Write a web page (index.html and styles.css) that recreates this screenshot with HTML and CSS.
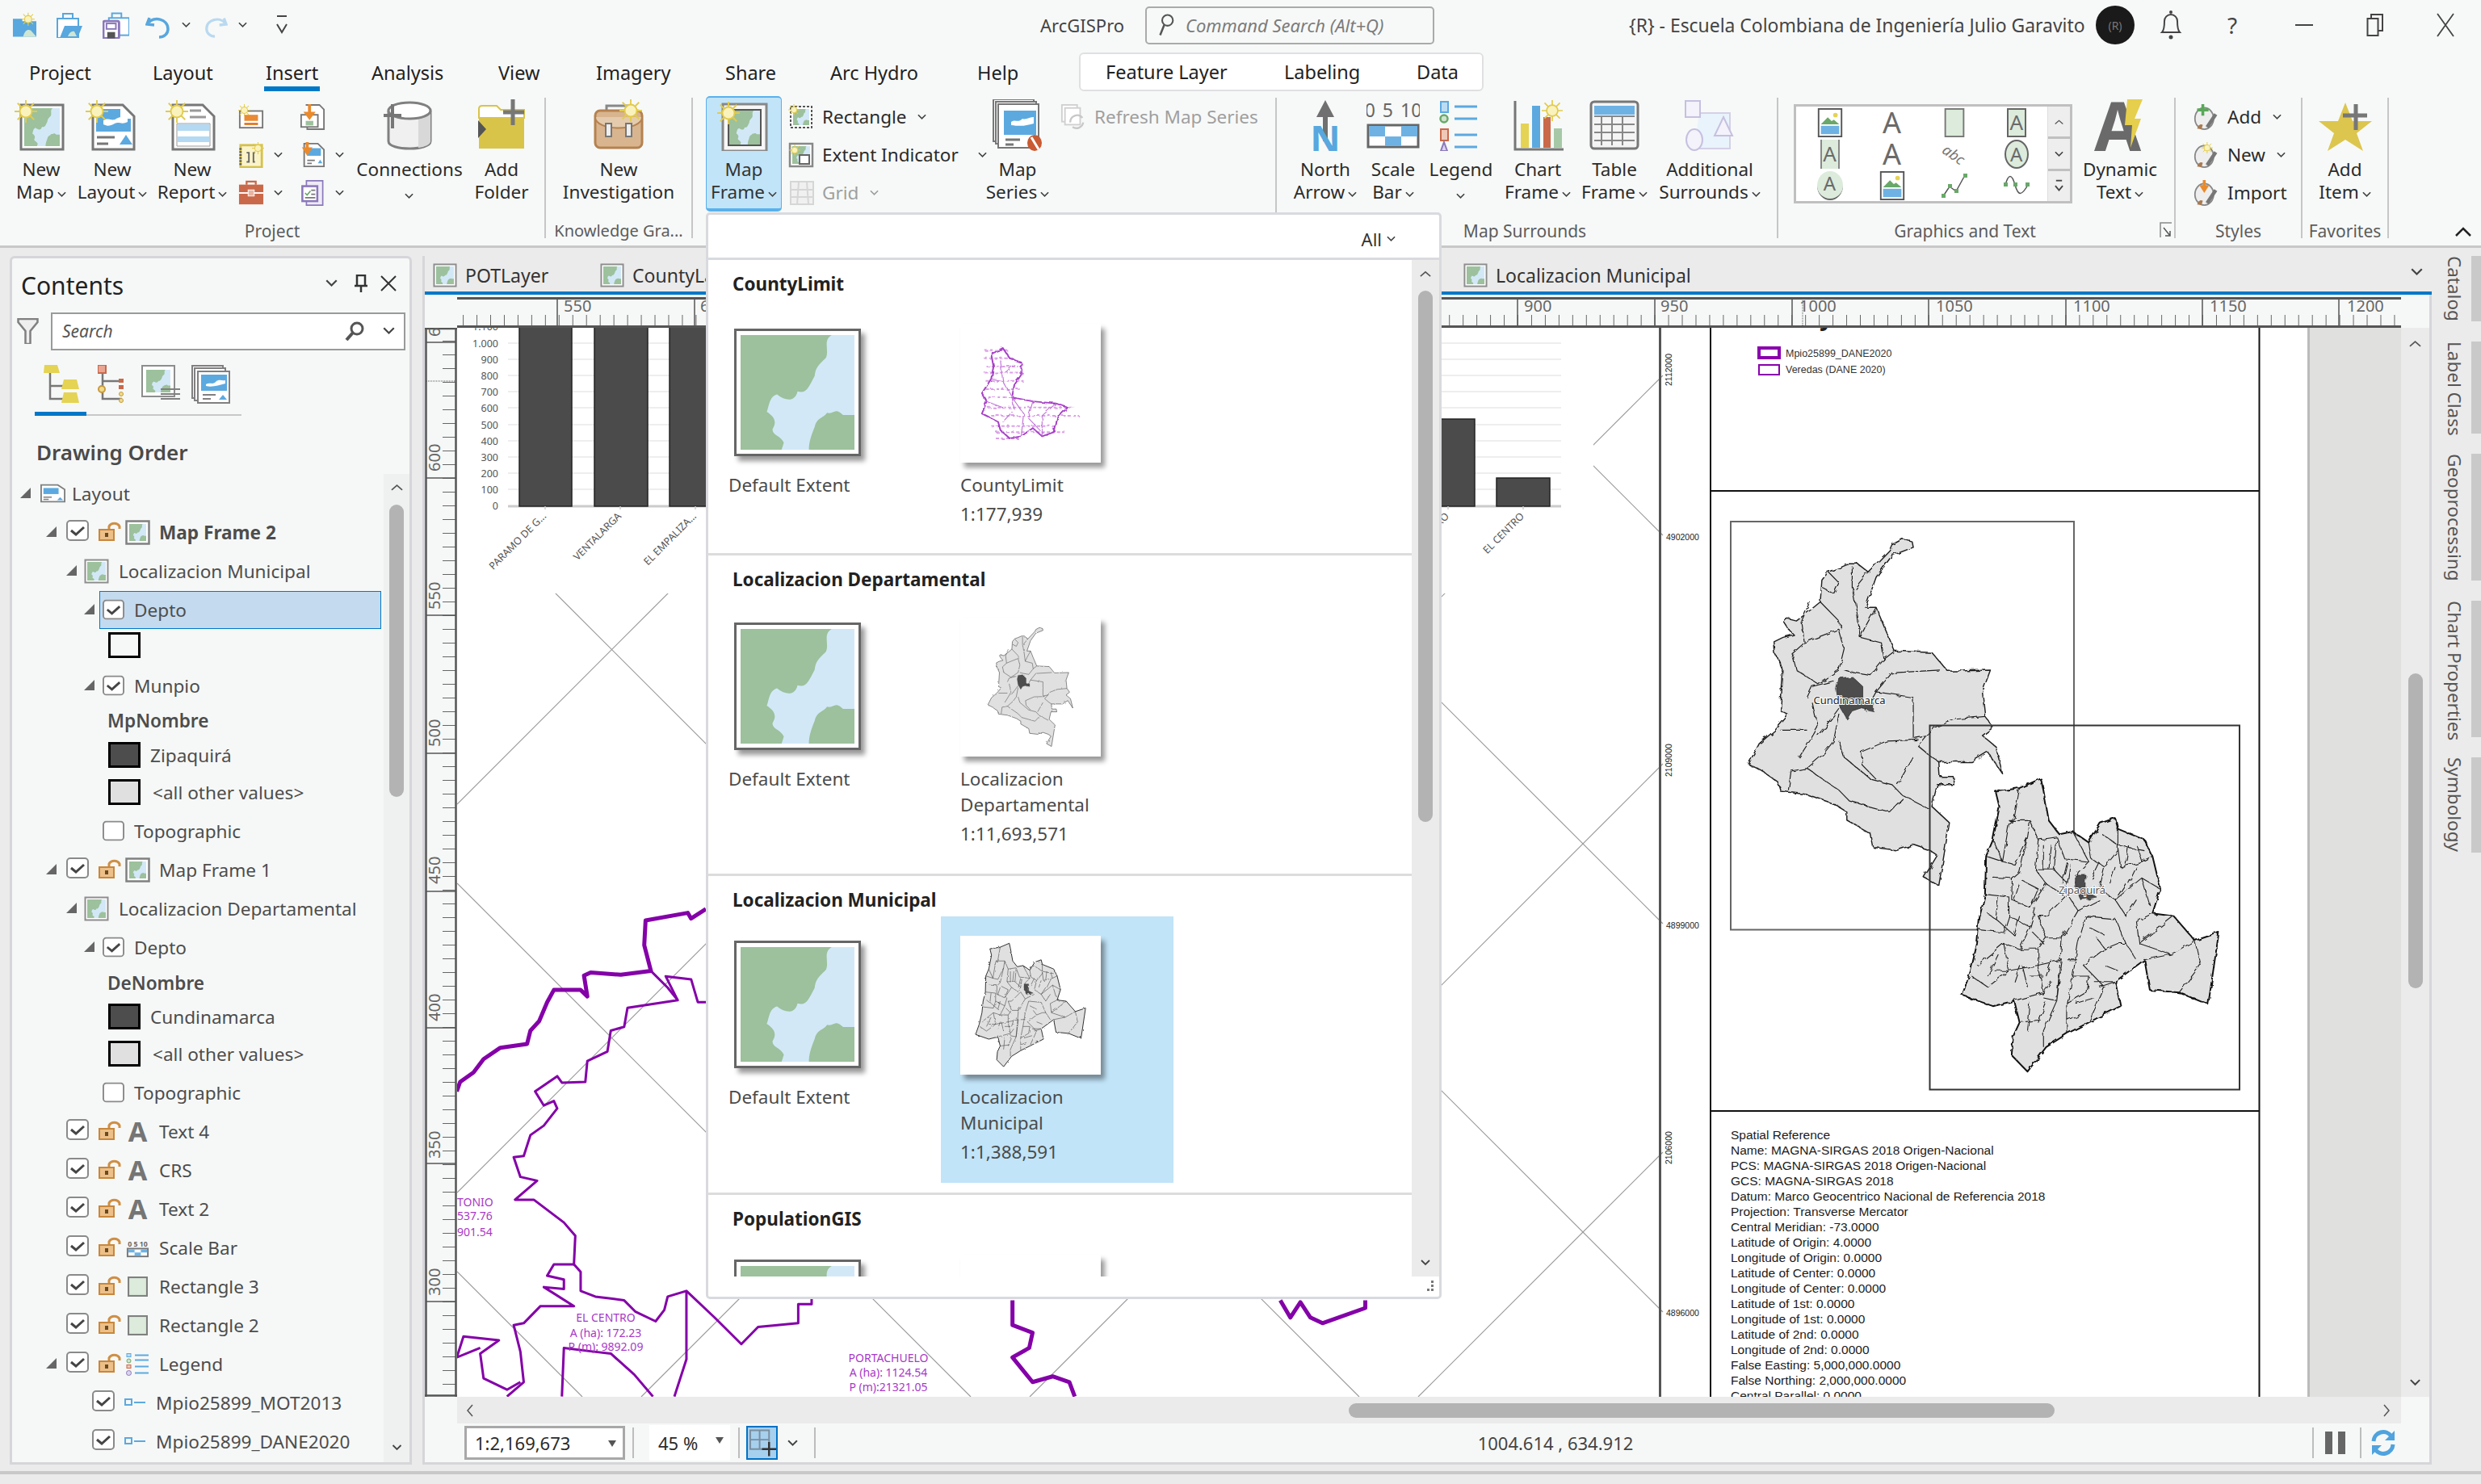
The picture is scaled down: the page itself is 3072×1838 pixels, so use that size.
FILE: index.html
```html
<!DOCTYPE html>
<html lang="es">
<head>
<meta charset="UTF-8">
<title>ArcGISPro</title>
<link rel="stylesheet" href="styles.css">
</head>
<body>
<svg class="defs" xmlns="http://www.w3.org/2000/svg">
  <filter id="rough" color-interpolation-filters="sRGB"><feTurbulence type="fractalNoise" baseFrequency=".07" numOctaves="2" seed="4"/><feDisplacementMap in="SourceGraphic" scale="9"/></filter>
  <symbol id="sun" viewBox="0 0 30 30"><g stroke="#e2cb4c" stroke-width="2"><path d="M15 0v30M0 15h30M4 4l22 22M26 4L4 26"/><circle cx="15" cy="15" r="8" fill="#f9f2bd"/></g></symbol>
  <symbol id="maparea" viewBox="0 0 100 112" preserveAspectRatio="none"><rect width="100" height="112" fill="#9cc19c"/><path fill="#d2e8f7" d="M80 0C72 5 78 15 75 22 70 28 66 30 65 40 60 50 58 58 50 55 48 65 40 65 32 58 25 60 25 70 23 75 30 80 32 85 28 92 28 98 35 98 38 105L36 112H60C60 105 62 98 65 90 67 80 72 82 76 76 82 78 82 70 90 78H100V0Z"/></symbol>
  <symbol id="mapframe" viewBox="0 0 31 31"><rect x="1.5" y="1.5" width="28" height="28" fill="#fff" stroke="#808080" stroke-width="2.5"/><use href="#maparea" x="5" y="5" width="21" height="21"/></symbol>
  <symbol id="mapicon" viewBox="0 0 31 31"><rect x="1.5" y="1.5" width="28" height="28" fill="#fff" stroke="#8d8d8d" stroke-width="2"/><use href="#maparea" x="4" y="4" width="23" height="23"/></symbol>
  <symbol id="check" viewBox="0 0 28 26"><rect x="1" y="1" width="26" height="24" rx="4" fill="#fff" stroke="#8a8a8a" stroke-width="2"/><path d="M6 13l6 5L22 9" fill="none" stroke="#454545" stroke-width="3"/></symbol>
  <symbol id="nocheck" viewBox="0 0 28 26"><rect x="1" y="1" width="26" height="24" rx="4" fill="#fff" stroke="#8a8a8a" stroke-width="2"/></symbol>
  <symbol id="lock" viewBox="0 0 28 26"><rect x="1" y="12" width="18" height="13" fill="#ecc088" stroke="#c8873d" stroke-width="2"/><rect x="8" y="16" width="4" height="5" fill="#6b4a20"/><path d="M13 11V8a7 6 0 0 1 13 0v3" fill="none" stroke="#cf8f45" stroke-width="3"/></symbol>
  <symbol id="chev" viewBox="0 0 12 8"><path d="M1 1l5 5 5-5" fill="none" stroke="#444" stroke-width="1.8"/></symbol>
  <symbol id="up" viewBox="0 0 16 9"><path d="M1 8l7-6 7 6" fill="none" stroke="#555" stroke-width="1.8"/></symbol>
  <symbol id="tri" viewBox="0 0 12 12"><path d="M12 0V12H0Z" fill="#666"/></symbol>
  <symbol id="legline" viewBox="0 0 26 12"><rect x="1" y="2" width="8" height="7" fill="none" stroke="#5ca9e0" stroke-width="2"/><path d="M12 6h14" stroke="#5ca9e0" stroke-width="2"/></symbol>
  <symbol id="rect" viewBox="0 0 24 24"><rect x="1" y="1" width="22" height="22" fill="#dcebdb" stroke="#808080" stroke-width="2"/></symbol>
  <symbol id="colombia" viewBox="180 490 500 660" preserveAspectRatio="none">
    <g filter="url(#rough)">
    <path fill="#e0e0e0" stroke="#1e1e1e" stroke-width="2.2" stroke-linejoin="round" d="M498 505L480 500 460 510 455 520 430 545 415 560 395 545 380 545 360 553 340 560 328 575 325 615 300 635 280 650 260 645 255 650 265 665 275 675 255 680 238 688 240 710 255 740 250 815 265 822 240 850 210 875 190 912 215 925 245 945 250 962 300 968 350 985 375 1000 375 1015 420 1040 425 1065 470 1070 500 1060 530 1070 545 1080 520 1120 548 1135 568 1020 535 990 545 950 578 950 575 935 550 935 548 908 610 908 640 890 668 930 655 880 630 860 650 845 635 825 630 780 645 740 565 742 535 708 465 705 445 660 430 625 410 625 430 570 460 530 500 515Z"/>
    <path fill="none" stroke="#1e1e1e" stroke-width="1.8" d="M340 560L360 580 350 600 330 590M385 550L385 590 395 640 400 680M415 560L390 590M325 615L360 650 365 665M305 615L290 650 295 690 320 680 360 665 370 700 360 740 320 765 280 740 272 710 295 690M430 625L410 660 400 680 440 690 445 720 420 750 390 745 370 740M445 720L465 705M550 740L460 745 430 780 410 815M500 790V865M500 790L430 780M502 865L530 860M635 825L580 830 540 845 510 880 535 900 548 908M360 870L370 900 420 940 460 950 480 970 530 995M510 868L450 870 402 890 405 915 430 940M500 900L470 950M360 820L350 870 330 895 300 920 360 960 380 980 455 1000 480 975M300 920L270 925 265 960M300 790L310 770 350 760M310 800L320 845 305 870 285 900M250 850H300M360 810L345 830 320 860"/>
    <path fill="#4d4d4d" stroke="#1e1e1e" d="M360 755L385 752 405 770 405 800 425 800 425 815 400 810 385 815 375 830 360 805 355 775Z"/>
    </g>
  </symbol>
  <symbol id="cundi" viewBox="585 930 500 555" preserveAspectRatio="none">
    <g filter="url(#rough)">
    <path fill="#e0e0e0" stroke="#111" stroke-width="3" stroke-linejoin="round" d="M740 938L700 955 655 962 662 990 650 1050 637 1080 635 1150 625 1190 620 1240 608 1290 592 1335 650 1355 690 1345 700 1385 688 1410 685 1445 715 1475 750 1430 790 1405 830 1385 890 1355 880 1310 935 1270 945 1325 1000 1330 1055 1352 1075 1220 1030 1235 990 1190 950 1185 965 1140 950 1080 935 1050 885 1030 880 1010 852 1020 830 1055 800 1035 775 1040 755 1015 745 960Z"/>
    <path fill="none" stroke="#222" stroke-width="1.700" d="M700 955L690 1010 680 1020 668 1090 690 1095 715 1045 720 1015 680 1015M720 1015L735 1050 770 1045M715 1045L700 1110 686 1122 685 1160M735 1050L730 1105 765 1105 770 1050M770 1045L785 1085 830 1090 800 1035M830 1055L835 1085 860 1100 885 1070 885 1030M855 1040L885 1060 935 1070M885 1065L890 1100 930 1090 950 1080M860 1100L850 1140 880 1160 930 1120 965 1140M930 1120L945 1170M880 1160L900 1190 920 1160M920 1200L950 1185M830 1090L810 1110M765 1105L790 1130 780 1150 750 1130 730 1105M685 1160L720 1175 750 1130M635 1150L680 1155 680 1190 670 1220 625 1215M680 1190L720 1210 730 1175M720 1210L700 1250 670 1240 620 1280M750 1190L790 1150 810 1180 780 1230 750 1230 735 1190ZM700 1250L735 1250 750 1230M670 1240L680 1290 640 1320 610 1300M680 1290L735 1280 735 1250M735 1280L745 1330 690 1345M735 1280L780 1270 770 1345 745 1340M780 1230L770 1345 745 1400 745 1430M700 1385L740 1380M825 1190L810 1240 800 1300 790 1350 790 1405M825 1190L880 1195 900 1240 885 1240 860 1250 845 1230M860 1250L820 1280 860 1320 830 1385M800 1300L830 1300 825 1330 790 1350M880 1310L840 1310M900 1240L920 1270M920 1200L925 1240 990 1190M925 1240L985 1260 1030 1235M985 1260L935 1270M1030 1235L1040 1280 1000 1330M810 1180L850 1160M705 1125L735 1140 720 1175M655 1195L690 1225M705 1280L715 1320M760 1270L750 1300M830 1210L860 1225M905 1130L920 1100M795 1095L790 1130M650 1050L668 1090M637 1080L668 1090M650 1120L686 1122M640 1185L655 1195M660 1155L655 1195M700 1130L690 1160M745 1060L745 1105M760 1060L755 1105M790 1090L780 1130M810 1110L805 1130M850 1090L835 1120M880 1100L870 1130M905 1060L900 1095M920 1060L930 1090M900 1130L880 1160M700 1190L690 1225M725 1220L745 1240M660 1260L640 1300M650 1290L680 1290M700 1280L690 1310M720 1300L745 1300M760 1310L745 1330M720 1350L715 1400M750 1350L735 1385M810 1270L790 1270M840 1340L805 1350M815 1370L790 1380M860 1280L885 1290M850 1320L880 1310"/>
    <path fill="#4d4d4d" stroke="#222" d="M805 1115L825 1115 825 1145 845 1155 815 1160 805 1140Z"/>
    </g>
  </symbol>
  <symbol id="county" viewBox="1215 190 220 240" preserveAspectRatio="none">
    <g filter="url(#rough)">
    <path fill="none" stroke="#dc9ee8" stroke-width="4" stroke-dasharray="7 4" d="M1225 205H1275M1225 225H1290M1230 245H1300M1225 260H1310M1228 280H1310M1228 300H1300M1232 320H1290M1232 345H1420M1240 365H1430M1240 390H1380M1250 405H1400M1250 420H1300"/>
    <path fill="none" stroke="#a63fc6" stroke-width="3.500" d="M1240 215L1265 200 1280 225 1305 235 1305 265 1290 290 1285 320 1330 330 1380 335 1405 345 1380 375 1375 405 1350 415 1330 395 1305 415 1280 420 1260 400 1255 380 1220 360 1230 330 1220 310 1240 275 1245 245Z"/>
    <path fill="none" stroke="#c174d8" stroke-width="2" d="M1240 275L1265 280 1285 320 1290 350 1265 380M1230 330L1265 345M1285 320L1310 360 1305 415M1330 330L1320 370 1345 400M1380 335L1350 365 1350 415M1260 230L1265 280M1290 240L1270 260"/>
    </g>
  </symbol>
</svg>

<header class="titlebar">
  <div class="qat">
    <svg class="q1" viewBox="0 0 32 32"><path d="M1 8h12v3h18v20H1z" fill="#58a7de"/><path d="M14 31c2-8 6-10 10-8l7 8z" fill="#cfe6d2"/><use href="#sun" x="12" y="0" width="17" height="17"/></svg>
    <svg class="q2" viewBox="0 0 32 32"><path d="M8 8V2h12v6" fill="none" stroke="#58a7de" stroke-width="2"/><path d="M1 8h26v24H1z" fill="#fff" stroke="#58a7de" stroke-width="2"/><path d="M4 32l6-15h22l-6 15z" fill="#58a7de"/><path d="M14 30c2-5 5-7 8-6l3 6z" fill="#cfe6d2"/></svg>
    <svg class="q3" viewBox="0 0 34 34"><path d="M12 8V2h12v6" fill="none" stroke="#58a7de" stroke-width="2"/><rect x="8" y="8" width="26" height="22" fill="#fff" stroke="#58a7de" stroke-width="2"/><rect x="1" y="12" width="20" height="22" rx="2" fill="#fff" stroke="#8a78ba" stroke-width="3"/><rect x="5" y="15" width="12" height="7" fill="#fff" stroke="#8a78ba" stroke-width="2"/><rect x="6" y="26" width="10" height="8" fill="#555"/></svg>
    <svg class="q4" viewBox="0 0 32 34"><path d="M5 8l-3 8 9 1" fill="none" stroke="#58a7de" stroke-width="3.500"/><path d="M4 14c6-8 24-5 24 8 0 6-5 10-11 10" fill="none" stroke="#58a7de" stroke-width="3.500"/></svg>
    <svg class="qc" viewBox="0 0 12 8"><use href="#chev"/></svg>
    <svg class="q5" viewBox="0 0 32 34"><path d="M27 8l3 8-9 1" fill="none" stroke="#b9d9f0" stroke-width="3.500"/><path d="M28 14c-6-8-24-5-24 8 0 6 5 10 11 10" fill="none" stroke="#b9d9f0" stroke-width="3.500"/></svg>
    <svg class="qc" viewBox="0 0 12 8"><use href="#chev"/></svg>
    <svg class="q6" viewBox="0 0 16 24"><path d="M2 1h12" stroke="#444" stroke-width="2"/><path d="M2 11l6 10 6-10" fill="none" stroke="#444" stroke-width="2"/></svg>
  </div>
  <span class="app-name">ArcGISPro</span>
  <div class="cmd-search">
    <svg viewBox="0 0 24 36"><circle cx="14" cy="11" r="8" fill="none" stroke="#555" stroke-width="2.500"/><path d="M9 18L3 33" stroke="#555" stroke-width="3"/></svg>
    <span>Command Search (Alt+Q)</span>
  </div>
  <span class="account">{R} - Escuela Colombiana de Ingeniería Julio Garavito</span>
  <span class="avatar">(R)</span>
  <svg class="bell" viewBox="0 0 28 38"><path d="M3 28c3-3 3-8 3-14a8 8 0 0 1 16 0c0 6 0 11 3 14z" fill="none" stroke="#444" stroke-width="2"/><circle cx="14" cy="3" r="2" fill="#444"/><circle cx="14" cy="34" r="2.500" fill="#444"/></svg>
  <span class="help">?</span>
  <svg class="win-min" viewBox="0 0 22 4"><path d="M0 2h22" stroke="#444" stroke-width="2"/></svg>
  <svg class="win-rest" viewBox="0 0 22 30"><rect x="1.500" y="7" width="13" height="21" fill="none" stroke="#444" stroke-width="2"/><path d="M6 7V2h14v20h-5" fill="none" stroke="#444" stroke-width="2"/></svg>
  <svg class="win-close" viewBox="0 0 24 32"><path d="M2 2l20 28M22 2L2 30" stroke="#444" stroke-width="1.800"/></svg>
</header>

<nav class="tabs">
  <a class="tab">Project</a>
  <a class="tab">Layout</a>
  <a class="tab active"><span>Insert</span></a>
  <a class="tab">Analysis</a>
  <a class="tab">View</a>
  <a class="tab">Imagery</a>
  <a class="tab">Share</a>
  <a class="tab">Arc Hydro</a>
  <a class="tab">Help</a>
  <div class="ctx-tabs">
    <a class="tab">Feature Layer</a>
    <a class="tab">Labeling</a>
    <a class="tab">Data</a>
  </div>
</nav>

<section class="ribbon">
  <div class="group g-project">
    <div class="g-body">
      <div class="lg w86">
        <svg class="big" viewBox="0 0 66 64"><rect x="8" y="7" width="52" height="55" fill="#fff" stroke="#777" stroke-width="3"/><use href="#maparea" x="12" y="11" width="44" height="47"/><use href="#sun" x="0" y="1" width="28" height="28"/></svg>
        <div class="lbl">New<br>Map<svg class="cv" viewBox="0 0 12 8"><use href="#chev"/></svg></div>
      </div>
      <div class="lg w90">
        <svg class="big" viewBox="0 0 66 64"><path d="M9 7h37l14 14v41H9z" fill="#fff" stroke="#777" stroke-width="3"/><path d="M13 12h30v12h13v16H13z" fill="#5ca9e0"/><path d="M22 26c8-4 10 2 16-2s8 0 14-1v5c-8 4-10-1-16 2s-8 4-14 1z" fill="#fff"/><path d="M14 47h22M14 55h14" stroke="#777" stroke-width="3"/><path d="M42 56l8-12 8 12z" fill="#5ca9e0"/><use href="#sun" x="0" y="1" width="28" height="28"/></svg>
        <div class="lbl">New<br>Layout<svg class="cv" viewBox="0 0 12 8"><use href="#chev"/></svg></div>
      </div>
      <div class="lg w108">
        <svg class="big" viewBox="0 0 66 64"><path d="M9 7h37l14 14v41H9z" fill="#fff" stroke="#777" stroke-width="3"/><path d="M14 30h41v28H14z" fill="#fff" stroke="#999"/><path d="M15 31h39v8H15zM15 46h39v7H15z" fill="#b4d9f2"/><path d="M30 14h14M30 22h20" stroke="#999" stroke-width="3"/><use href="#sun" x="0" y="1" width="28" height="28"/></svg>
        <div class="lbl">New<br>Report<svg class="cv" viewBox="0 0 12 8"><use href="#chev"/></svg></div>
      </div>
      <div class="sm-grid">
        <div class="cell"><svg class="sm" viewBox="0 0 34 34"><rect x="2" y="9" width="30" height="22" fill="#fff" stroke="#777" stroke-width="2"/><rect x="8" y="14" width="18" height="8" fill="#e98a35"/><path d="M8 26h18" stroke="#e07a20" stroke-width="3"/><use href="#sun" x="0" y="0" width="16" height="16"/></svg></div>
        <div class="cell"><svg class="sm" viewBox="0 0 34 34"><path d="M8 1h18l6 6v26H10V24" fill="#fff" stroke="#777" stroke-width="2"/><rect x="2" y="14" width="22" height="16" fill="#fff" stroke="#777" stroke-width="2"/><path d="M13 0v14" stroke="#ea8a2c" stroke-width="4"/><path d="M5 10l8 11 8-11z" fill="#ea8a2c"/><path d="M8 22h10v6H8z" fill="#9cc19c"/></svg></div>
        <div class="cell"><svg class="sm" viewBox="0 0 34 34"><rect x="3" y="4" width="28" height="29" fill="#fbf3c8" stroke="#d4c14e" stroke-width="3"/><path d="M3 8v22" stroke="#555" stroke-width="3" stroke-dasharray="2 2"/><path d="M11 14h3v12h-3M22 14h-2v12h2" fill="none" stroke="#666" stroke-width="2"/><use href="#sun" x="18" y="0" width="16" height="16"/></svg><svg class="cv" viewBox="0 0 12 8"><use href="#chev"/></svg></div>
        <div class="cell"><svg class="sm" viewBox="0 0 34 34"><path d="M6 2h18l8 8v22H6z" fill="#fff" stroke="#777" stroke-width="2"/><path d="M10 8h18v10H10z" fill="#5ca9e0"/><path d="M10 24h10M10 28h6" stroke="#777" stroke-width="2"/><path d="M24 28l3-5 3 5z" fill="#5ca9e0"/><path d="M10 0v11" stroke="#ea8a2c" stroke-width="4"/><path d="M3 7l7 11 7-11z" fill="#ea8a2c"/></svg><svg class="cv" viewBox="0 0 12 8"><use href="#chev"/></svg></div>
        <div class="cell"><svg class="sm" viewBox="0 0 34 34"><path d="M11 6V2h12v4" fill="none" stroke="#c9694a" stroke-width="2.500"/><rect x="1" y="6" width="32" height="26" fill="#c9694a"/><path d="M1 17h32" stroke="#fff" stroke-width="2"/><rect x="13" y="13" width="8" height="8" fill="#e9b5a2" stroke="#fff"/></svg><svg class="cv" viewBox="0 0 12 8"><use href="#chev"/></svg></div>
        <div class="cell"><svg class="sm" viewBox="0 0 34 38"><path d="M8 1h24v36H8z" fill="#eeeaf6" stroke="#8a78ba" stroke-width="2"/><rect x="2" y="9" width="22" height="22" fill="#fff" stroke="#8a78ba" stroke-width="3"/><path d="M6 19l3 3 5-6" fill="none" stroke="#69a869" stroke-width="2"/><path d="M15 15h6M15 21h6M6 26h15" stroke="#777" stroke-width="2"/></svg><svg class="cv" viewBox="0 0 12 8"><use href="#chev"/></svg></div>
      </div>
      <div class="lg w134">
        <svg class="big" viewBox="0 0 66 64"><path d="M7 14v38c0 12 52 12 52 0V14" fill="#f0f0f0" stroke="#808080" stroke-width="3"/><path d="M44 22v38c8-1 15-4 15-8V14z" fill="#d8d8d8"/><ellipse cx="33" cy="14" rx="26" ry="10" fill="#fff" stroke="#808080" stroke-width="3"/><path d="M12 6v30M1 20h22" stroke="#777" stroke-width="4"/></svg>
        <div class="lbl">Connections<br><svg class="cv solo" viewBox="0 0 12 8"><use href="#chev"/></svg></div>
      </div>
      <div class="lg w94">
        <svg class="big" viewBox="0 0 66 64"><path d="M5 12c0-3 2-4 4-4h18l5 5h29v48H5z" fill="#d9c44a"/><path d="M5 12c0-3 2-4 4-4h18l5 5h29v10H5z" fill="#fff" stroke="#d9c44a" stroke-width="2"/><path d="M4 26l10 11L4 48z" fill="#555"/><path d="M47 0v32M35 16h26" stroke="#777" stroke-width="5"/></svg>
        <div class="lbl">Add<br>Folder</div>
      </div>
    </div>
    <div class="g-label">Project</div>
  </div>

  <div class="group g-knowledge">
    <div class="g-body">
      <div class="lg w180">
        <svg class="big" viewBox="0 0 66 64"><path d="M18 14V8h26v8" fill="none" stroke="#888" stroke-width="3"/><rect x="4" y="14" width="58" height="46" rx="6" fill="#d8b58f" stroke="#b5824f" stroke-width="3"/><path d="M4 22c0 18 58 18 58 0" fill="#e4cbad" stroke="#b5824f" stroke-width="2"/><rect x="17" y="30" width="7" height="16" fill="#eee" stroke="#777" stroke-width="2"/><rect x="42" y="30" width="7" height="16" fill="#eee" stroke="#777" stroke-width="2"/><use href="#sun" x="34" y="0" width="28" height="28"/></svg>
        <div class="lbl">New<br>Investigation</div>
      </div>
    </div>
    <div class="g-label trunc">Knowledge Gra...</div>
  </div>

  <div class="group g-mapframe">
    <div class="g-body">
      <div class="lg w94 on">
        <svg class="big" viewBox="0 0 66 64"><rect x="7" y="6" width="54" height="58" fill="#f7f7f7" stroke="#888" stroke-width="3"/><rect x="14" y="13" width="40" height="44" fill="none" stroke="#555" stroke-width="2"/><use href="#maparea" x="15" y="14" width="38" height="42"/><use href="#sun" x="0" y="1" width="28" height="32"/></svg>
        <div class="lbl blue">Map<br>Frame<svg class="cv" viewBox="0 0 12 8"><use href="#chev"/></svg></div>
      </div>
      <div class="sm-col w232">
        <div class="sm-row">
          <svg class="sm" viewBox="0 0 32 32"><rect x="3" y="3" width="26" height="26" fill="#fff" stroke="#555" stroke-width="2" stroke-dasharray="3 2"/><use href="#maparea" x="6" y="6" width="20" height="20"/><use href="#sun" x="0" y="0" width="14" height="14"/></svg>
          <span>Rectangle</span><svg class="cv c1" viewBox="0 0 12 8"><use href="#chev"/></svg>
        </div>
        <div class="sm-row">
          <svg class="sm" viewBox="0 0 32 32"><rect x="2" y="2" width="28" height="28" fill="#fff" stroke="#888" stroke-width="2.500"/><use href="#maparea" x="5" y="5" width="22" height="22"/><rect x="14" y="16" width="12" height="11" fill="#fff" stroke="#666" stroke-width="2"/><use href="#sun" x="1" y="2" width="14" height="16"/></svg>
          <span>Extent Indicator</span><svg class="cv c2" viewBox="0 0 12 8"><use href="#chev"/></svg>
        </div>
        <div class="sm-row off">
          <svg class="sm" viewBox="0 0 32 32"><rect x="3" y="2" width="28" height="28" fill="#f0f0f0" stroke="#d6d6d6" stroke-width="2"/><path d="M3 12h28M3 21h28M13 2l-2 28M23 2l2 28" stroke="#d6d6d6" stroke-width="2"/></svg>
          <span>Grid</span><svg class="cv c1 faint" viewBox="0 0 12 8"><use href="#chev"/></svg>
        </div>
      </div>
      <div class="lg w120">
        <svg class="big" viewBox="0 0 66 64"><rect x="3" y="0" width="50" height="52" fill="#fff" stroke="#777" stroke-width="2"/><rect x="6" y="3" width="50" height="52" fill="#fff" stroke="#777" stroke-width="2"/><rect x="9" y="6" width="50" height="54" fill="#fff" stroke="#777" stroke-width="2"/><rect x="16" y="14" width="40" height="30" fill="#5ca9e0"/><path d="M25 28c6-4 8 2 14-4 4 2 8-2 14-2v8c-8 2-14 4-28 2z" fill="#fff"/><path d="M18 50h18M18 56h10" stroke="#777" stroke-width="3"/><ellipse cx="54" cy="54" rx="9" ry="10" fill="#c95a32"/><path d="M50 47l9 15" stroke="#fff" stroke-width="3"/></svg>
        <div class="lbl">Map<br>Series<svg class="cv" viewBox="0 0 12 8"><use href="#chev"/></svg></div>
      </div>
      <div class="sm-col refresh">
        <div class="sm-row off">
          <svg class="sm" viewBox="0 0 32 34"><rect x="1" y="1" width="20" height="22" fill="#fff" stroke="#d0d0d0" stroke-width="2"/><rect x="5" y="5" width="20" height="22" fill="#fff" stroke="#d0d0d0" stroke-width="2"/><path d="M12 24a9 9 0 0 1 16-6M29 24a9 9 0 0 1-14 6" fill="none" stroke="#c8c8c8" stroke-width="2.500"/></svg>
          <span>Refresh Map Series</span>
        </div>
      </div>
    </div>
  </div>

  <div class="group g-surrounds">
    <div class="g-body">
      <div class="lg w84">
        <svg class="big" viewBox="0 0 66 64"><path d="M33 1L22 22h8v30h6V22h8z" fill="#707070"/><text x="33" y="66" class="n-glyph">N</text></svg>
        <div class="lbl">North<br>Arrow<svg class="cv" viewBox="0 0 12 8"><use href="#chev"/></svg></div>
      </div>
      <div class="lg w84">
        <svg class="big" viewBox="0 0 66 64"><text x="33" y="22" class="sb-text">0 5 10</text><rect x="2" y="32" width="62" height="27" fill="#fff" stroke="#666" stroke-width="3"/><path d="M3 33h20v13H3zM43 33h20v13H43zM23 46h20v12H23z" fill="#6eb2e4"/></svg>
        <div class="lbl">Scale<br>Bar<svg class="cv" viewBox="0 0 12 8"><use href="#chev"/></svg></div>
      </div>
      <div class="lg w84">
        <svg class="big" viewBox="0 0 66 64"><rect x="8" y="3" width="9" height="13" fill="#bcdcf3" stroke="#5ca9e0" stroke-width="2"/><circle cx="12" cy="24" r="4.500" fill="#cfe3cf" stroke="#69a869" stroke-width="2.500"/><rect x="8" y="37" width="9" height="14" fill="#f0c8b8" stroke="#c9694a" stroke-width="2"/><path d="M12 53l4 11H8z" fill="#dcd5ee" stroke="#8a78ba" stroke-width="2"/><path d="M25 9h28M25 24h28M25 44h28M25 59h28" stroke="#5ca9e0" stroke-width="3"/></svg>
        <div class="lbl">Legend<br><svg class="cv solo" viewBox="0 0 12 8"><use href="#chev"/></svg></div>
      </div>
      <div class="lg w106">
        <svg class="big" viewBox="0 0 66 64"><path d="M5 2v60h60" fill="none" stroke="#777" stroke-width="3"/><rect x="12" y="30" width="10" height="30" fill="#e5d354"/><rect x="26" y="8" width="10" height="52" fill="#5ca9e0"/><rect x="40" y="22" width="9" height="38" fill="#c9694a"/><rect x="53" y="36" width="10" height="24" fill="#a6c8a6"/><use href="#sun" x="38" y="0" width="26" height="28"/></svg>
        <div class="lbl">Chart<br>Frame<svg class="cv" viewBox="0 0 12 8"><use href="#chev"/></svg></div>
      </div>
      <div class="lg w84">
        <svg class="big" viewBox="0 0 66 64"><rect x="4" y="3" width="58" height="58" rx="4" fill="#f4f4f4" stroke="#777" stroke-width="3"/><rect x="8" y="8" width="50" height="11" fill="#6eb2e4"/><path d="M8 21h50M8 31h50M8 41h50M8 51h50M17 21v36M30 21v36M43 21v36" stroke="#888" stroke-width="2"/></svg>
        <div class="lbl">Table<br>Frame<svg class="cv" viewBox="0 0 12 8"><use href="#chev"/></svg></div>
      </div>
      <div class="lg w152">
        <svg class="big" viewBox="0 0 66 64"><path d="M20 17h38v44H14" fill="#e9f3fb" stroke="#d4d0e6" stroke-width="2"/><rect x="3" y="2" width="18" height="20" fill="#f4f2fa" stroke="#c6c0e0" stroke-width="2"/><path d="M50 22l11 23H39z" fill="#f4f2fa" stroke="#c6c0e0" stroke-width="2"/><ellipse cx="14" cy="50" rx="10" ry="13" fill="#f4f2fa" stroke="#c6c0e0" stroke-width="2"/></svg>
        <div class="lbl">Additional<br>Surrounds<svg class="cv" viewBox="0 0 12 8"><use href="#chev"/></svg></div>
      </div>
    </div>
    <div class="g-label shift">Map Surrounds</div>
  </div>

  <div class="group g-graphics">
    <div class="g-body">
      <div class="gallery">
        <div class="gal-grid">
          <svg viewBox="0 0 32 38"><rect x="1" y="1" width="30" height="36" fill="#fff" stroke="#555" stroke-width="2"/><path d="M4 21l9-9 5 5 3-2 7 6z" fill="#69a869"/><path d="M4 23h24v11H4z" fill="#6eb2e4"/><circle cx="23" cy="9" r="3" fill="#e5d354"/></svg>
          <span class="ga">A</span>
          <svg viewBox="0 0 26 38"><rect x="1" y="1" width="24" height="36" fill="#dcebdb" stroke="#777" stroke-width="2"/></svg>
          <span class="ga boxed">A</span>
          <span class="ga skew">A</span>
          <span class="ga">A</span>
          <span class="ga-abc">abc</span>
          <span class="ga round">A</span>
          <span class="ga pin">A</span>
          <svg viewBox="0 0 32 38"><rect x="1" y="1" width="30" height="36" fill="#fff" stroke="#555" stroke-width="2"/><path d="M4 21l9-9 5 5 3-2 7 6z" fill="#69a869"/><path d="M4 23h24v11H4z" fill="#6eb2e4"/><circle cx="23" cy="9" r="3" fill="#e5d354"/></svg>
          <svg viewBox="0 0 34 30"><path d="M3 28l8-12 8 6 11-20" fill="none" stroke="#555" stroke-width="1.500"/><g fill="#69a869"><rect x="1" y="25" width="5" height="5"/><rect x="9" y="13" width="5" height="5"/><rect x="17" y="19" width="5" height="5"/><rect x="28" y="0" width="5" height="5"/></g></svg>
          <svg viewBox="0 0 34 30"><path d="M3 14c4-14 8-14 12 0s8 14 16 0" fill="none" stroke="#555" stroke-width="1.500"/><g fill="#69a869"><rect x="1" y="11" width="5" height="5"/><rect x="13" y="11" width="5" height="5"/><rect x="28" y="11" width="5" height="5"/></g></svg>
        </div>
        <div class="gal-side">
          <div><svg viewBox="0 0 16 9"><use href="#up"/></svg></div>
          <div><svg viewBox="0 0 12 8"><use href="#chev"/></svg></div>
          <div class="more"><svg viewBox="0 0 12 18"><path d="M2 1h8" stroke="#444" stroke-width="2"/><path d="M1 8l5 6 5-6" fill="none" stroke="#444" stroke-width="2"/></svg></div>
        </div>
      </div>
      <div class="lg w118">
        <svg class="big" viewBox="0 0 66 64"><text x="30" y="64" class="dyn-a">A</text><path d="M42 0h19L51 24h8L46 60l2-28h-9z" fill="#e5cf4c"/></svg>
        <div class="lbl">Dynamic<br>Text<svg class="cv" viewBox="0 0 12 8"><use href="#chev"/></svg></div>
      </div>
    </div>
    <div class="g-label shift2">Graphics and Text</div>
    <svg class="launcher" viewBox="0 0 16 20"><path d="M1 19V1h14" fill="none" stroke="#888" stroke-width="1.500"/><path d="M5 7l8 10M13 11v6H7" fill="none" stroke="#555" stroke-width="1.500"/></svg>
  </div>

  <div class="group g-styles">
    <div class="g-body">
      <div class="sm-col wfull">
        <div class="sm-row"><svg class="sm" viewBox="0 0 34 36"><ellipse cx="14" cy="20" rx="13" ry="15" fill="#eee" stroke="#888" stroke-width="2"/><path d="M18 32l12-18" stroke="#777" stroke-width="5"/><path d="M4 34c2-5 5-7 8-5l-2 6z" fill="#a87a50"/><path d="M12 0v16M4 8h16" stroke="#5aa85a" stroke-width="4"/></svg><span>Add</span><svg class="cv c1" viewBox="0 0 12 8"><use href="#chev"/></svg></div>
        <div class="sm-row"><svg class="sm" viewBox="0 0 34 36"><ellipse cx="14" cy="20" rx="13" ry="15" fill="#eee" stroke="#888" stroke-width="2"/><path d="M18 32l12-18" stroke="#777" stroke-width="5"/><path d="M4 34c2-5 5-7 8-5l-2 6z" fill="#a87a50"/><use href="#sun" x="10" y="0" width="16" height="16"/></svg><span>New</span><svg class="cv c1" viewBox="0 0 12 8"><use href="#chev"/></svg></div>
        <div class="sm-row"><svg class="sm" viewBox="0 0 34 36"><ellipse cx="14" cy="20" rx="13" ry="15" fill="#eee" stroke="#888" stroke-width="2"/><path d="M18 32l12-18" stroke="#777" stroke-width="5"/><path d="M4 34c2-5 5-7 8-5l-2 6z" fill="#a87a50"/><path d="M14 0v10" stroke="#ea8a2c" stroke-width="4"/><path d="M7 7l7 11 7-11z" fill="#ea8a2c"/></svg><span>Import</span></div>
      </div>
    </div>
    <div class="g-label">Styles</div>
  </div>

  <div class="group g-favorites">
    <div class="g-body">
      <div class="lg wfull">
        <svg class="big" viewBox="0 0 66 64"><path d="M33 4l9 23h24L47 42l8 22-22-14-22 14 8-22L0 27h24z" fill="#dcc64e"/><path d="M46 6v32M30 20h30" stroke="#777" stroke-width="5"/></svg>
        <div class="lbl">Add<br>Item<svg class="cv" viewBox="0 0 12 8"><use href="#chev"/></svg></div>
      </div>
    </div>
    <div class="g-label">Favorites</div>
  </div>
  <svg class="collapse" viewBox="0 0 20 12"><path d="M1 11l9-9 9 9" fill="none" stroke="#222" stroke-width="2.500"/></svg>
</section>

<main class="work">
  <aside class="contents">
    <div class="pane-head">
      <h2>Contents</h2>
      <svg class="ph-chev" viewBox="0 0 12 8"><use href="#chev"/></svg>
      <svg class="ph-pin" viewBox="0 0 16 22"><path d="M3 1h10v13H3zM0 14h16M8 14v8" fill="none" stroke="#333" stroke-width="2.500"/></svg>
      <svg class="ph-x" viewBox="0 0 20 20"><path d="M1 1l18 18M19 1L1 19" stroke="#333" stroke-width="2"/></svg>
    </div>
    <div class="search-row">
      <svg class="funnel" viewBox="0 0 26 32"><path d="M1 1h24v4L16 16v16h-6V16L1 5z" fill="#eee" stroke="#808080" stroke-width="2.500"/></svg>
      <div class="search-box"><span>Search</span>
        <svg class="sb-glass" viewBox="0 0 24 24"><circle cx="15" cy="9" r="7" fill="none" stroke="#555" stroke-width="3"/><path d="M10 14l-8 9" stroke="#555" stroke-width="4"/></svg>
        <svg class="sb-chev" viewBox="0 0 12 8"><use href="#chev"/></svg>
      </div>
    </div>
    <div class="view-tabs">
      <div class="vt vt-on"><svg viewBox="0 0 46 48"><path d="M10 6v36h16M10 26h16" fill="none" stroke="#777" stroke-width="2.500"/><path d="M3 0h16l3 10H2zM27 18h16l3 12H24zM27 34h16l3 13H24z" fill="#e5d354"/></svg></div>
      <div class="vt"><svg viewBox="0 0 34 48"><path d="M6 10v32h24M6 20h24" fill="none" stroke="#777" stroke-width="2.500"/><rect x="0" y="0" width="10" height="10" fill="#e9a592" stroke="#c9694a" stroke-width="2"/><circle cx="5" cy="30" r="4" fill="#f0dc8a" stroke="#c89a3a" stroke-width="2"/><rect x="26" y="17" width="6" height="5" fill="#c9694a"/><rect x="26" y="25" width="6" height="5" fill="#c9694a"/><circle cx="29" cy="36" r="2.500" fill="#f0dc8a" stroke="#c89a3a"/><circle cx="29" cy="44" r="2.500" fill="#f0dc8a" stroke="#c89a3a"/></svg></div>
      <div class="vt"><svg viewBox="0 0 48 44"><rect x="1" y="1" width="40" height="38" fill="#fff" stroke="#8d8d8d" stroke-width="2"/><use href="#maparea" x="6" y="6" width="30" height="28"/><path d="M24 30h24M24 36h24M24 42h24" stroke="#808080" stroke-width="2"/></svg></div>
      <div class="vt"><svg viewBox="0 0 48 48"><rect x="1" y="1" width="38" height="40" fill="#fff" stroke="#808080" stroke-width="2"/><rect x="4" y="4" width="38" height="40" fill="#fff" stroke="#808080" stroke-width="2"/><rect x="8" y="8" width="39" height="39" fill="#fff" stroke="#808080" stroke-width="2"/><rect x="12" y="12" width="32" height="20" fill="#5ca9e0"/><path d="M18 24c6-3 8 1 12-3s8-1 12-2v4c-8 2-16 5-24 3z" fill="#fff"/><path d="M14 37h16M14 42h10" stroke="#808080" stroke-width="2"/><path d="M34 43l5-6 5 6z" fill="#5ca9e0"/></svg></div>
    </div>
    <h3>Drawing Order</h3>
    <div class="tree-wrap">
      <div class="tree">
        <div class="row lv0"><svg class="tri" viewBox="0 0 12 12"><use href="#tri"/></svg><svg class="ic31" viewBox="0 0 33 24"><path d="M1 1h22l9 6v16H1z" fill="#fff" stroke="#808080" stroke-width="2"/><path d="M4 5h20v8H4z" fill="#5ca9e0"/><path d="M4 17h11M4 20h7" stroke="#808080" stroke-width="1.500"/><path d="M22 21l4-4 4 4z" fill="#5ca9e0"/></svg><span class="t">Layout</span></div>
        <div class="row lv1"><svg class="tri" viewBox="0 0 12 12"><use href="#tri"/></svg><svg class="cb" viewBox="0 0 28 26"><use href="#check"/></svg><svg class="lk" viewBox="0 0 28 26"><use href="#lock"/></svg><svg class="ic31" viewBox="0 0 31 31"><use href="#mapframe"/></svg><span class="t b">Map Frame 2</span></div>
        <div class="row lv2"><svg class="tri" viewBox="0 0 12 12"><use href="#tri"/></svg><svg class="ic31" viewBox="0 0 31 31"><use href="#mapicon"/></svg><span class="t">Localizacion Municipal</span></div>
        <div class="row lv3 sel-row"><svg class="tri" viewBox="0 0 12 12"><use href="#tri"/></svg><div class="sel"><svg class="cb3" viewBox="0 0 28 26"><use href="#check"/></svg><span class="t">Depto</span></div></div>
        <div class="row lvs h40"><span class="sw sw-w"></span></div>
        <div class="row lv3 mt6"><svg class="tri" viewBox="0 0 12 12"><use href="#tri"/></svg><svg class="cb3" viewBox="0 0 28 26"><use href="#check"/></svg><span class="t">Munpio</span></div>
        <div class="row lvs h38"><span class="t sb">MpNombre</span></div>
        <div class="row lvs"><span class="sw sw-d"></span><span class="t">Zipaquirá</span></div>
        <div class="row lvs h44"><span class="sw sw-g"></span><span class="t oth">&lt;all other values&gt;</span></div>
        <div class="row lv3 mt2 notri"><svg class="cb3" viewBox="0 0 28 26"><use href="#nocheck"/></svg><span class="t">Topographic</span></div>
        <div class="row lv1"><svg class="tri" viewBox="0 0 12 12"><use href="#tri"/></svg><svg class="cb" viewBox="0 0 28 26"><use href="#check"/></svg><svg class="lk" viewBox="0 0 28 26"><use href="#lock"/></svg><svg class="ic31" viewBox="0 0 31 31"><use href="#mapframe"/></svg><span class="t">Map Frame 1</span></div>
        <div class="row lv2"><svg class="tri" viewBox="0 0 12 12"><use href="#tri"/></svg><svg class="ic31" viewBox="0 0 31 31"><use href="#mapicon"/></svg><span class="t">Localizacion Departamental</span></div>
        <div class="row lv3"><svg class="tri" viewBox="0 0 12 12"><use href="#tri"/></svg><svg class="cb3" viewBox="0 0 28 26"><use href="#check"/></svg><span class="t">Depto</span></div>
        <div class="row lvs h40"><span class="t sb">DeNombre</span></div>
        <div class="row lvs h44"><span class="sw sw-d"></span><span class="t">Cundinamarca</span></div>
        <div class="row lvs"><span class="sw sw-g"></span><span class="t oth">&lt;all other values&gt;</span></div>
        <div class="row lv3 notri"><svg class="cb3" viewBox="0 0 28 26"><use href="#nocheck"/></svg><span class="t">Topographic</span></div>
        <div class="row lv1 notri"><svg class="cb" viewBox="0 0 28 26"><use href="#check"/></svg><svg class="lk" viewBox="0 0 28 26"><use href="#lock"/></svg><span class="a-ic">A</span><span class="t">Text 4</span></div>
        <div class="row lv1 notri"><svg class="cb" viewBox="0 0 28 26"><use href="#check"/></svg><svg class="lk" viewBox="0 0 28 26"><use href="#lock"/></svg><span class="a-ic">A</span><span class="t">CRS</span></div>
        <div class="row lv1 notri"><svg class="cb" viewBox="0 0 28 26"><use href="#check"/></svg><svg class="lk" viewBox="0 0 28 26"><use href="#lock"/></svg><span class="a-ic">A</span><span class="t">Text 2</span></div>
        <div class="row lv1 notri"><svg class="cb" viewBox="0 0 28 26"><use href="#check"/></svg><svg class="lk" viewBox="0 0 28 26"><use href="#lock"/></svg><svg class="ic31" viewBox="0 0 32 26"><text x="16" y="11" class="sb-mini">0 5 10</text><rect x="3" y="14" width="26" height="10" fill="#fff" stroke="#777" stroke-width="2"/><path d="M4 15h8v4H4zM20 15h8v4h-8zM12 19h8v4h-8z" fill="#6eb2e4"/></svg><span class="t">Scale Bar</span></div>
        <div class="row lv1 notri"><svg class="cb" viewBox="0 0 28 26"><use href="#check"/></svg><svg class="lk" viewBox="0 0 28 26"><use href="#lock"/></svg><svg class="ic31" viewBox="0 0 31 31"><use href="#rect" x="3" y="3" width="25" height="25"/></svg><span class="t">Rectangle 3</span></div>
        <div class="row lv1 notri"><svg class="cb" viewBox="0 0 28 26"><use href="#check"/></svg><svg class="lk" viewBox="0 0 28 26"><use href="#lock"/></svg><svg class="ic31" viewBox="0 0 31 31"><use href="#rect" x="3" y="3" width="25" height="25"/></svg><span class="t">Rectangle 2</span></div>
        <div class="row lv1"><svg class="tri" viewBox="0 0 12 12"><use href="#tri"/></svg><svg class="cb" viewBox="0 0 28 26"><use href="#check"/></svg><svg class="lk" viewBox="0 0 28 26"><use href="#lock"/></svg><svg class="ic31" viewBox="0 0 31 30"><rect x="2" y="2" width="5" height="4" fill="#bcdcf3" stroke="#5ca9e0"/><circle cx="4.500" cy="11" r="2.500" fill="#cfe3cf" stroke="#69a869"/><rect x="2" y="16" width="5" height="4" fill="#f0c8b8" stroke="#c9694a"/><circle cx="4.500" cy="26" r="3" fill="#dcd5ee" stroke="#8a78ba"/><path d="M12 4h17M12 10h17M12 18h17M12 26h17" stroke="#5ca9e0" stroke-width="1.800"/></svg><span class="t">Legend</span></div>
        <div class="row lvl"><svg class="cb" viewBox="0 0 28 26"><use href="#check"/></svg><svg class="ll" viewBox="0 0 26 12"><use href="#legline"/></svg><span class="t">Mpio25899_MOT2013</span></div>
        <div class="row lvl"><svg class="cb" viewBox="0 0 28 26"><use href="#check"/></svg><svg class="ll" viewBox="0 0 26 12"><use href="#legline"/></svg><span class="t">Mpio25899_DANE2020</span></div>
      </div>
      <div class="tree-scroll">
        <svg class="arr" viewBox="0 0 16 9"><use href="#up"/></svg>
        <div class="thumb"></div>
        <svg class="arr dn" viewBox="0 0 12 8"><use href="#chev"/></svg>
      </div>
    </div>
  </aside>

  <section class="doc">
    <div class="doc-tabs">
      <div class="dtab t1"><svg class="ic30" viewBox="0 0 31 31"><use href="#mapicon"/></svg>POTLayer</div>
      <div class="dtab t2"><svg class="ic30" viewBox="0 0 31 31"><use href="#mapicon"/></svg>CountyLayer</div>
      <div class="dtab t3"><svg class="ic30" viewBox="0 0 31 31"><use href="#mapicon"/></svg>Localizacion Municipal</div>
      <svg class="dt-chev" viewBox="0 0 12 8"><use href="#chev"/></svg>
    </div>
    <div class="ruler-row">
      <div class="corner"></div>
      <svg class="hruler" viewBox="566 368 2407 38" preserveAspectRatio="none">
        <defs><pattern id="ht" patternUnits="userSpaceOnUse" x="2048.600" y="368" width="16.960" height="38"><path d="M.5 22V38" stroke="#666"/></pattern></defs>
        <rect x="566" y="368" width="2407" height="38" fill="#f6f8f7"/>
        <rect x="566" y="390" width="2407" height="14" fill="url(#ht)"/>
        <g stroke="#555" stroke-width="1.500"><path d="M690 370V405M860 370V405M1879 370V405M2049 370V405M2219 370V405M2388 370V405M2558 370V405M2727 370V405M2896 370V405"/></g>
        <path d="M2232 370V405" stroke="#555" stroke-dasharray="1 1"/>
        <path d="M566 369.500H2973M566 404.500H2973" stroke="#555" stroke-width="3"/>
        <g class="rl"><text x="698" y="386">550</text><text x="867" y="386">600</text><text x="1887" y="386">900</text><text x="2056" y="386">950</text><text x="2228" y="386">1000</text><text x="2397" y="386">1050</text><text x="2567" y="386">1100</text><text x="2736" y="386">1150</text><text x="2906" y="386">1200</text></g>
      </svg>
      <div class="corner-r"></div>
    </div>
    <div class="view-row">
      <svg class="vruler" viewBox="526 406 40 1324" preserveAspectRatio="none">
        <defs><pattern id="vt" patternUnits="userSpaceOnUse" x="526" y="422" width="40" height="17"><path d="M22 .5H38" stroke="#666"/></pattern></defs>
        <rect x="526" y="406" width="40" height="1324" fill="#f6f8f7"/>
        <rect x="526" y="406" width="38" height="1322" fill="url(#vt)"/>
        <path d="M528 424H564M528 592H564M528 762H564M528 933H564M528 1104H564M528 1273H564M528 1441H564M528 1612H564" stroke="#555" stroke-width="1.500"/>
        <path d="M528 472H564" stroke="#555" stroke-dasharray="1 1"/>
        <path d="M527.500 406V1730M564.500 406V1730M526 1728.500H566M526 407H566" stroke="#555" stroke-width="2.500"/>
        <g class="rl rot"><text transform="translate(545 417) rotate(-90)">650</text><text transform="translate(545 584) rotate(-90)">600</text><text transform="translate(545 755) rotate(-90)">550</text><text transform="translate(545 925) rotate(-90)">500</text><text transform="translate(545 1095) rotate(-90)">450</text><text transform="translate(545 1265) rotate(-90)">400</text><text transform="translate(545 1435) rotate(-90)">350</text><text transform="translate(545 1605) rotate(-90)">300</text></g>
      </svg>
      <div class="canvas">
        <svg viewBox="566 406 2407 1324" preserveAspectRatio="none">
          <rect x="566" y="406" width="2292" height="1324" fill="#fff"/>
          <rect x="2858" y="406" width="115" height="1324" fill="#e0e0df"/>
          <path d="M2858.500 406V1730" stroke="#bbb" stroke-width="3"/>
          <g class="grid-l">
            <path d="M566 996L1156 406M566 1477L1637 406M794 1730L2059 465M1275 1730L2059 946M1756 1730L2059 1427"/>
            <path d="M566 1094L1202 1730M566 613L1683 1730M840 406L2059 1625M1321 406L2059 1144M1802 406L2059 663M566 1575L721 1730"/>
          </g>
          <rect x="566" y="406" width="1407" height="329" fill="#fff"/>
          <path d="M2055.500 406V1730" stroke="#555" stroke-width="3"/>
          <path d="M2118 406V1730M2797.500 406V1730M2118 608H2798M2118 1376H2798" stroke="#111" stroke-width="2"/>
          <g class="grid-t"><text transform="translate(2070 478) rotate(-90)">2112000</text><text x="2063" y="669">4902000</text><text transform="translate(2070 962) rotate(-90)">2109000</text><text x="2063" y="1150">4899000</text><text transform="translate(2070 1442) rotate(-90)">2106000</text><text x="2063" y="1630">4896000</text></g>

          <!-- chart -->
          <path class="gl" d="M629 405.500H1933M629 425H1933M629 445H1933M629 465H1933M629 485H1933M629 505H1933M629 526H1933M629 546H1933M629 566H1933M629 586H1933M629 606H1933"/>
          <path d="M629 627H1933" stroke="#ccc" stroke-width="3"/>
          <g fill="#4b4b4b" stroke="#222" stroke-width="1.500"><rect x="643" y="400" width="65" height="227"/><rect x="736" y="400" width="66" height="227"/><rect x="829" y="400" width="66" height="227"/><rect x="1760" y="519" width="66" height="108"/><rect x="1853" y="592" width="66" height="35"/></g>
          <path d="M675 627v4M768 627v4M861 627v4M1793 627v4M1886 627v4" stroke="#ccc" stroke-width="1.500"/>
          <g class="ax"><text x="617" y="409">1.100</text><text x="617" y="430">1.000</text><text x="617" y="450">900</text><text x="617" y="470">800</text><text x="617" y="490">700</text><text x="617" y="510">600</text><text x="617" y="531">500</text><text x="617" y="551">400</text><text x="617" y="571">300</text><text x="617" y="591">200</text><text x="617" y="611">100</text><text x="617" y="631">0</text></g>
          <g class="cat"><text transform="translate(677 640) rotate(-45)">PARAMO DE G...</text><text transform="translate(770 640) rotate(-45)">VENTALARGA</text><text transform="translate(863 640) rotate(-45)">EL EMPALIZA...</text><text transform="translate(1795 640) rotate(-45)">SAN JORGE CENTRO</text><text transform="translate(1888 640) rotate(-45)">EL CENTRO</text></g>

          <!-- municipio -->
          <g class="mun" transform="translate(520 1100) scale(.829 .4706)">
            <path class="thick" d="M55 535L60 510 80 485 95 450 120 420 160 410 165 375 178 350 190 300 200 268 240 268 250 285 245 230 255 222 300 228 345 218 335 150 337 85 400 65 405 80 427 55"/>
            <path class="thin" d="M345 218L370 262 385 295 310 315 305 365 285 375 280 430 250 455 247 510 212 512 205 495 172 535 185 572 200 560 205 580 185 625 165 650 155 705 140 708 150 760 175 770 142 820 170 820 215 880 232 915 230 990 200 990 190 1020 215 1030 215 1055 185 1050 230 1100 180 1100 155 1145 140 1150 150 1220 155 1300 130 1338"/>
            <path class="thin" d="M385 295L367 232 405 240 415 300 427 300"/>
            <path class="thin" d="M230 990L240 1010 240 1060 262 1075 285 1080 305 1085 322 1115 352 1140 365 1110 370 1075 398 1060 440 1130 480 1200 505 1155 565 1145 565 1095 585 1095 585 1080"/>
            <path class="thin" d="M398 1060V1240L380 1338M212 1338L215 1210 260 1220 285 1225 320 1280 348 1338M55 1235L65 1180 118 1190 90 1225 95 1290 130 1320 150 1300M55 1235L90 1210"/>
            <path class="thick" d="M885 1085V1150L915 1170 910 1210 885 1235 915 1300 945 1285 970 1300 978 1338M1285 1085L1300 1130 1315 1090 1330 1130 1348 1145 1412 1105V1085"/>
          </g>
          <g class="mlabel"><text x="566" y="1494">TONIO</text><text x="566" y="1511">537.76</text><text x="566" y="1531">901.54</text><g class="c"><text x="750" y="1637">EL CENTRO</text><text x="750" y="1656">A (ha): 172.23</text><text x="750" y="1673">P (m): 9892.09</text><text x="1100" y="1687">PORTACHUELO</text><text x="1100" y="1705">A (ha): 1124.54</text><text x="1100" y="1723">P (m):21321.05</text></g></g>

          <!-- layout right -->
          <text class="ley" x="2219" y="403">Leyenda</text>
          <rect x="2178" y="431" width="25" height="12" fill="#fff" stroke="#8a00ac" stroke-width="4"/>
          <rect x="2178" y="452" width="25" height="12" fill="#fff" stroke="#8a00ac" stroke-width="2"/>
          <g class="leg-t"><text x="2211" y="442">Mpio25899_DANE2020</text><text x="2211" y="462">Veredas (DANE 2020)</text></g>
          <rect x="2143" y="646" width="425" height="505.500" fill="none" stroke="#666" stroke-width="2"/>
          <use href="#colombia" x="2158.500" y="661" width="329" height="446"/>
          <rect x="2389.500" y="898.500" width="383.500" height="451" fill="none" stroke="#333" stroke-width="2"/>
          <use href="#cundi" x="2425" y="959" width="329" height="375"/>
          <text class="cn" x="2290" y="872">Cundinamarca</text>
          <text class="cn zi" x="2578" y="1107">Zipaquirá</text>
          <text class="spatial" x="2143" y="1411"><tspan x="2143">Spatial Reference</tspan><tspan x="2143" dy="19">Name: MAGNA-SIRGAS 2018 Origen-Nacional</tspan><tspan x="2143" dy="19">PCS: MAGNA-SIRGAS 2018 Origen-Nacional</tspan><tspan x="2143" dy="19">GCS: MAGNA-SIRGAS 2018</tspan><tspan x="2143" dy="19">Datum: Marco Geocentrico Nacional de Referencia 2018</tspan><tspan x="2143" dy="19">Projection: Transverse Mercator</tspan><tspan x="2143" dy="19">Central Meridian: -73.0000</tspan><tspan x="2143" dy="19">Latitude of Origin: 4.0000</tspan><tspan x="2143" dy="19">Longitude of Origin: 0.0000</tspan><tspan x="2143" dy="19">Latitude of Center: 0.0000</tspan><tspan x="2143" dy="19">Longitude of Center: 0.0000</tspan><tspan x="2143" dy="19">Latitude of 1st: 0.0000</tspan><tspan x="2143" dy="19">Longitude of 1st: 0.0000</tspan><tspan x="2143" dy="19">Latitude of 2nd: 0.0000</tspan><tspan x="2143" dy="19">Longitude of 2nd: 0.0000</tspan><tspan x="2143" dy="19">False Easting: 5,000,000.0000</tspan><tspan x="2143" dy="19">False Northing: 2,000,000.0000</tspan><tspan x="2143" dy="19">Central Parallel: 0.0000</tspan></text>
        </svg>
      </div>
      <div class="vscroll">
        <svg class="arr" viewBox="0 0 16 9"><use href="#up"/></svg>
        <div class="vthumb"></div>
        <svg class="arr" viewBox="0 0 12 8"><use href="#chev"/></svg>
      </div>
    </div>
    <div class="hscroll-row">
      <div class="hs-corner"></div>
      <div class="hscroll">
        <svg class="hs-l" viewBox="0 0 8 16"><path d="M7 1L1 8l6 7" fill="none" stroke="#555" stroke-width="1.500"/></svg>
        <div class="hthumb"></div>
        <svg class="hs-r" viewBox="0 0 8 16"><path d="M1 1l6 7-6 7" fill="none" stroke="#555" stroke-width="1.500"/></svg>
      </div>
    </div>
    <div class="status">
      <div class="scale-box">1:2,169,673<i class="drop"></i></div>
      <span class="sep s1"></span>
      <div class="zoom-box">45 %<i class="drop"></i></div>
      <span class="sep s2"></span>
      <div class="snap-btn"><svg viewBox="0 0 36 38"><path d="M3 3h24v24H3zM3 15h24M15 3v24" fill="none" stroke="#7a8ea0" stroke-width="2"/><path d="M27 18v18M18 27h18" stroke="#333" stroke-width="2.500"/></svg></div>
      <svg class="st-chev" viewBox="0 0 12 8"><use href="#chev"/></svg>
      <span class="sep s3"></span>
      <span class="coords">1004.614 , 634.912</span>
      <span class="sep s4"></span>
      <div class="pause"><i></i><i></i></div>
      <span class="sep s5"></span>
      <svg class="refresh-ic" viewBox="0 0 32 32"><path d="M4 14a12 12 0 0 1 22-6" fill="none" stroke="#4fa3de" stroke-width="5"/><path d="M30 1v12H18z" fill="#4fa3de"/><path d="M28 18a12 12 0 0 1-22 6" fill="none" stroke="#4fa3de" stroke-width="5"/><path d="M2 31V19h12z" fill="#4fa3de"/></svg>
    </div>
  </section>

  <aside class="dock">
    <div class="dock-tab d1">Catalog</div>
    <div class="dock-tab d2">Label Class</div>
    <div class="dock-tab d3">Geoprocessing</div>
    <div class="dock-tab d4">Chart Properties</div>
    <div class="dock-tab d5">Symbology</div>
  </aside>
</main>

<!-- Map Frame dropdown -->
<div class="mf-pop">
  <div class="pop-head">All<svg viewBox="0 0 12 8"><use href="#chev"/></svg></div>
  <div class="pop-main">
    <div class="pop-list">
      <section class="pop-sec s-a">
        <h4>CountyLimit</h4>
        <div class="items">
          <div class="item"><div class="thumb-d"><svg viewBox="0 0 100 112" preserveAspectRatio="none"><use href="#maparea"/></svg></div><p>Default Extent</p></div>
          <div class="item it2"><div class="thumb-w"><svg class="m-county" viewBox="0 0 220 240" preserveAspectRatio="none"><use href="#county" width="220" height="240"/></svg></div><p>CountyLimit</p><p class="sc">1:177,939</p></div>
        </div>
      </section>
      <section class="pop-sec s-b">
        <h4>Localizacion Departamental</h4>
        <div class="items">
          <div class="item"><div class="thumb-d"><svg viewBox="0 0 100 112" preserveAspectRatio="none"><use href="#maparea"/></svg></div><p>Default Extent</p></div>
          <div class="item it2"><div class="thumb-w"><svg class="m-col" viewBox="0 0 500 660" preserveAspectRatio="none"><use href="#colombia" width="500" height="660"/></svg></div><p>Localizacion<br>Departamental</p><p class="sc">1:11,693,571</p></div>
        </div>
      </section>
      <section class="pop-sec s-c">
        <h4>Localizacion Municipal</h4>
        <div class="items">
          <div class="item"><div class="thumb-d"><svg viewBox="0 0 100 112" preserveAspectRatio="none"><use href="#maparea"/></svg></div><p>Default Extent</p></div>
          <div class="item it2 picked"><div class="thumb-w"><svg class="m-cun" viewBox="0 0 500 555" preserveAspectRatio="none"><use href="#cundi" width="500" height="555"/></svg></div><p>Localizacion<br>Municipal</p><p class="sc">1:1,388,591</p></div>
        </div>
      </section>
      <section class="pop-sec s-d">
        <h4>PopulationGIS</h4>
        <div class="items">
          <div class="item"><div class="thumb-d"><svg viewBox="0 0 100 112" preserveAspectRatio="none"><use href="#maparea"/></svg></div><p>Default Extent</p></div>
          <div class="item it2"><div class="thumb-w"></div></div>
        </div>
      </section>
    </div>
    <div class="pop-scroll">
      <svg class="arr" viewBox="0 0 16 9"><use href="#up"/></svg>
      <div class="pop-thumb"></div>
      <svg class="arr" viewBox="0 0 12 8"><use href="#chev"/></svg>
    </div>
  </div>
  <div class="pop-foot"><svg viewBox="0 0 14 14"><path d="M10 1h3v3h-3zM10 6h3v3h-3zM10 11h3v3h-3zM5 11h3v3H5z" fill="#777"/></svg></div>
</div>
</body>
</html>
```

FILE: styles.css
```css
* {
    box-sizing: border-box;
}
body {
    margin: 0;
    width: 3072px;
    height: 1838px;
    overflow: hidden;
    position: relative;
    background: #f7f9f8;
    font-family: "Noto Sans", "Open Sans", sans-serif;
    font-size: 23px;
    color: #2b2b2b;
}
svg {
    display: block;
    flex: none;
}
.defs {
    position: absolute;
    width: 0;
    height: 0;
}

/* title bar */
.titlebar {
    height: 62px;
    display: flex;
    align-items: center;
    padding-left: 15px;
}
.qat {
    display: flex;
    align-items: center;
    width: 1273px;
}
.q1 { width: 31px; height: 32px; }
.q2 { width: 32px; height: 32px; margin-left: 24px; }
.q3 { width: 33px; height: 34px; margin-left: 25px; }
.q4 { width: 32px; height: 34px; margin-left: 20px; }
.q5 { width: 30px; height: 34px; margin-left: 16px; }
.qc { width: 11px; height: 8px; margin-left: 13px; }
.q6 { width: 16px; height: 24px; margin-left: 35px; }
.app-name {
    width: 130px;
    font-size: 22px;
    color: #444;
}
.cmd-search {
    width: 358px;
    height: 47px;
    border: 2px solid #aaa;
    border-radius: 5px;
    display: flex;
    align-items: center;
    padding-left: 14px;
    font-size: 22px;
    font-style: italic;
    color: #7c7c7c;
}
.cmd-search svg {
    width: 20px;
    height: 30px;
    margin-right: 14px;
}
.account {
    margin-left: 241px;
    width: 570px;
    white-space: nowrap;
    font-size: 22.900px;
    color: #444;
}
.avatar {
    width: 48px;
    height: 48px;
    border-radius: 50%;
    background: #1a1a1a;
    color: #777;
    font-size: 14px;
    display: flex;
    align-items: center;
    justify-content: center;
    margin-left: 8px;
}
.bell { width: 28px; height: 38px; margin-left: 31px; }
.help { font-size: 28px; color: #444; margin-left: 56px; }
.win-min { width: 22px; height: 4px; margin-left: 72px; }
.win-rest { width: 22px; height: 30px; margin-left: 66px; }
.win-close { width: 24px; height: 32px; margin-left: 64px; }

/* tabs */
.tabs {
    height: 51px;
    display: grid;
    grid-template-columns: 153px 140px 131px 157px 121px 160px 130px 182px 126px 501px;
    padding-left: 36px;
    align-items: center;
    font-size: 23.500px;
}
.tab {
    color: #222;
    white-space: nowrap;
}
.tabs > .tab {
    position: relative;
    top: 2px;
}
.tab.active {
    top: 0;
    align-self: start;
}
.tab.active span {
    display: inline-block;
    height: 45px;
    line-height: 56px;
    border-bottom: 6px solid #0078c8;
    box-sizing: content-box;
    margin-left: -2px;
    padding: 0 2px;
}
.ctx-tabs {
    height: 48px;
    margin-top: 2px;
    background: #fff;
    border: 2px solid #e0e0e2;
    border-radius: 6px;
    display: grid;
    grid-template-columns: 221px 164px auto;
    align-items: center;
    padding-left: 31px;
}

/* ribbon */
.ribbon {
    height: 194px;
    display: flex;
    align-items: flex-start;
    border-bottom: 3px solid #c8c8c8;
    padding-top: 8px;
    position: relative;
    font-size: 23px;
}
.group {
    height: 174px;
    border-right: 2px solid #c6c6c6;
    position: relative;
}
.g-project { width: 676px; padding-left: 8px; }
.g-knowledge { width: 182px; }
.g-mapframe { width: 723px; padding-left: 16px; }
.g-surrounds { width: 621px; padding-left: 18px; }
.g-graphics { width: 492px; padding-left: 19px; }
.g-styles { width: 157px; }
.g-favorites { width: 107px; }
.g-body {
    height: 150px;
    display: flex;
    align-items: flex-start;
}
.g-label {
    height: 24px;
    line-height: 30px;
    font-size: 21px;
    color: #5c5c5c;
    text-align: center;
    white-space: nowrap;
}
.g-project .g-label { margin-left: -8px; }
.g-label.trunc { font-size: 20px; }
.g-label.shift { position: absolute; left: 207px; width: 200px; bottom: 0; }
.g-label.shift2 { margin-left: -19px; margin-right: 28px; }
.launcher {
    position: absolute;
    right: 2px;
    bottom: 0;
    width: 16px;
    height: 20px;
}
.collapse {
    position: absolute;
    left: 3040px;
    top: 168px;
    width: 20px;
    height: 12px;
}
.lg {
    display: flex;
    flex-direction: column;
    align-items: center;
    text-align: center;
    flex: none;
}
.big {
    width: 66px;
    height: 64px;
    margin-top: 2px;
}
.lbl {
    margin-top: 9px;
    line-height: 28px;
    white-space: nowrap;
    color: #2b2b2b;
    font-size: 22.500px;
}
.lbl.blue { color: #333; }
.cv {
    display: inline-block;
    width: 11px;
    height: 8px;
    margin-left: 4px;
    vertical-align: 1px;
}
.cv.solo { margin: 0; vertical-align: -1px; }
.cv.faint { opacity: .5; }
.w84 { width: 84px; }
.w86 { width: 86px; }
.w90 { width: 90px; }
.w94 { width: 94px; }
.w106 { width: 106px; }
.w108 { width: 108px; }
.w118 { width: 118px; }
.w120 { width: 120px; }
.w134 { width: 134px; }
.w152 { width: 152px; }
.w180 { width: 180px; }
.w232 { width: 232px; }
.wfull { width: 100%; }
.lg.on {
    margin-top: -2px;
    height: 143px;
    background: #c2e4f8;
    border-top: 2px solid #59b1ec;
    border-bottom: 4px solid #59b1ec;
    border-left: 1px solid #59b1ec;
    border-right: 1px solid #59b1ec;
    border-radius: 5px;
}
.sm-grid {
    width: 148px;
    height: 141px;
    display: grid;
    grid-template-columns: 76px 72px;
    grid-template-rows: repeat(3, 47px);
    padding-left: 3px;
}
.cell {
    display: flex;
    align-items: center;
    gap: 12px;
}
.cell .cv { margin: 0; }
.sm {
    width: 32px;
    height: 32px;
}
.sm-col {
    height: 141px;
    display: flex;
    flex-direction: column;
    padding-left: 8px;
}
.sm-row {
    height: 47px;
    display: flex;
    align-items: center;
    gap: 10px;
    white-space: nowrap;
    font-size: 22.500px;
}
.sm-row.off { color: #9f9f9f; }
.refresh {
    width: 260px;
    margin-left: -10px;
    padding-left: 3px;
}
.c1 { margin-left: 4px; }
.c2 { margin-left: 14px; }
.g-styles .sm-col { padding-left: 22px; }
.gallery {
    width: 345px;
    height: 123px;
    margin-top: 8px;
    background: #fff;
    border: 3px solid #c0c0c0;
    display: flex;
    flex: none;
}
.gal-grid {
    width: 314px;
    display: grid;
    grid-template-columns: repeat(4, 1fr);
    grid-template-rows: repeat(3, 39px);
    justify-items: center;
    align-items: center;
    padding: 0 0 0 3px;
}
.gal-grid svg {
    height: 36px;
    width: 34px;
}
.ga {
    font-size: 36px;
    line-height: 36px;
    color: #6a6a6a;
    text-align: center;
    width: 32px;
    height: 36px;
}
.ga.boxed { background: #dcebdb; border: 2px solid #666; font-size: 26px; line-height: 31px; width: 24px; }
.ga.skew { background: #dcebdb; font-size: 26px; line-height: 34px; border-left: 2px solid #888; border-right: 2px solid #888; width: 24px; }
.ga.round { border: 2px solid #666; border-radius: 50%; background: #dcebdb; font-size: 24px; line-height: 31px; width: 30px; }
.ga.pin { border-bottom: 2px solid #666; border-radius: 50%; background: #dcebdb; font-size: 24px; line-height: 30px; width: 32px; }
.ga-abc {
    font-size: 18px;
    color: #777;
    font-style: italic;
    transform: rotate(35deg);
}
.gal-side {
    width: 28px;
    display: flex;
    flex-direction: column;
    background: #eeeeef;
    border-left: 1px solid #ddd;
}
.gal-side div {
    flex: 1;
    display: flex;
    align-items: center;
    justify-content: center;
    border-bottom: 3px solid #c0c0c0;
}
.gal-side div:last-child { border-bottom: none; }
.gal-side svg { width: 11px; height: 8px; }
.gal-side .more svg { width: 11px; height: 18px; }
.n-glyph {
    font-family: "Noto Sans", sans-serif;
    font-size: 46px;
    font-weight: 700;
    fill: #58a7de;
    text-anchor: middle;
}
.sb-text {
    font-size: 23px;
    word-spacing: 3px;
    fill: #666;
    text-anchor: middle;
}
.dyn-a {
    font-size: 84px;
    font-weight: 700;
    fill: #6a6a6a;
    text-anchor: middle;
}

/* work area */
.work {
    height: 1519px;
    display: flex;
    background: #ebebeb;
    border-bottom: 4px solid #c8c8c8;
    padding-top: 10px;
    position: relative;
}
body::after {
    content: "";
    position: absolute;
    left: 0;
    top: 1826px;
    width: 100%;
    height: 12px;
    background: #ebebeb;
}
.contents {
    width: 498px;
    height: 1497px;
    margin-left: 12px;
    background: #f6f8f7;
    border: 3px solid #d6d6da;
    border-radius: 6px 6px 0 0;
    flex: none;
}
.pane-head {
    height: 66px;
    display: flex;
    align-items: center;
    padding-left: 11px;
}
.pane-head h2 {
    margin: 0;
    font-size: 30px;
    font-weight: 400;
    color: #222;
    width: 377px;
}
.ph-chev { width: 15px; height: 10px; margin-top: -4px; }
.ph-pin { width: 16px; height: 22px; margin-left: 21px; margin-top: -4px; }
.ph-x { width: 20px; height: 20px; margin-left: 16px; margin-top: -4px; }
.search-row {
    height: 48px;
    display: flex;
    align-items: center;
    padding-left: 6px;
}
.funnel { width: 27px; height: 32px; }
.search-box {
    margin-left: 15px;
    width: 439px;
    height: 47px;
    background: #fff;
    border: 2px solid #9a9a9a;
    display: flex;
    align-items: center;
    padding-left: 12px;
    font-size: 21px;
    font-style: italic;
    color: #555;
}
.search-box span { width: 350px; }
.sb-glass { width: 24px; height: 24px; }
.sb-chev { width: 15px; height: 10px; margin-left: 23px; }
.view-tabs {
    margin: 12px 0 0 28px;
    width: 256px;
    height: 69px;
    display: flex;
    border-bottom: 2px solid #c8c8c8;
}
.vt {
    height: 69px;
    padding-top: 6px;
    display: flex;
    justify-content: center;
}
.vt:nth-child(1) { width: 64px; border-bottom: 5px solid #0078c8; }
.vt:nth-child(1) svg { width: 46px; height: 48px; }
.vt:nth-child(2) { width: 56px; margin-left: 3px; }
.vt:nth-child(2) svg { width: 34px; height: 48px; }
.vt:nth-child(3) { width: 66px; margin-left: 0; }
.vt:nth-child(3) svg { width: 48px; height: 44px; }
.vt:nth-child(4) { width: 50px; margin-left: 4px; }
.vt:nth-child(4) svg { width: 48px; height: 48px; }
.contents h3 {
    margin: 27px 0 0 30px;
    font-size: 26px;
    line-height: 36px;
    font-weight: 600;
    color: #4a4a4a;
}
.tree-wrap {
    display: flex;
    margin-top: 9px;
}
.tree {
    width: 460px;
    color: #4d4d4d;
}
.tree-scroll {
    width: 32px;
    height: 1224px;
    background: #eff1f0;
    position: relative;
    display: flex;
    flex-direction: column;
    align-items: center;
    padding-top: 12px;
}
.tree-scroll .arr { width: 15px; height: 9px; }
.tree-scroll .thumb {
    width: 18px;
    height: 362px;
    margin-top: 17px;
    border-radius: 9px;
    background: #b3b3b3;
}
.tree-scroll .dn {
    margin-top: auto;
    margin-bottom: 14px;
    width: 13px;
    height: 8px;
}
.row {
    height: 48px;
    display: flex;
    align-items: center;
    white-space: nowrap;
    font-size: 22.600px;
}
.lv0 { padding-left: 10px; }
.lv1 { padding-left: 42px; }
.lv2 { padding-left: 67px; }
.lv3 { padding-left: 89px; }
.lvs { padding-left: 119px; }
.lvl { padding-left: 99px; }
.h38 { height: 38px; }
.h40 { height: 40px; }
.h44 { height: 44px; }
.mt6 { margin-top: 6px; }
.mt2 { margin-top: 2px; }
.row > .tri { width: 13px; height: 13px; margin-right: 12px; margin-top: -2px; }
.lv2 > .tri { margin-right: 9px; }
.lv3 > .tri { margin-right: 10px; }
.notri.lv1 { padding-left: 67px; }
.notri.lv3 { padding-left: 112px; }
.sel-row > .tri { margin-right: 6px; }
.sel {
    width: 349px;
    height: 47px;
    background: #c4daef;
    border: 1px solid #0078c8;
    display: flex;
    align-items: center;
    padding-left: 3px;
}
.cb { width: 28px; height: 26px; margin-top: -4px; }
.cb3 { width: 27px; height: 26px; margin-right: 12px; }
.lk { width: 28px; height: 26px; margin: -4px 5px 0 12px; }
.ic31 { width: 31px; height: 31px; margin-right: 11px; }
.lv0 .ic31 { margin-right: 8px; height: 24px; }
.lv2 .ic31 { margin-right: 12px; }
.a-ic {
    width: 31px;
    margin-right: 11px;
    font-size: 34px;
    line-height: 34px;
    font-weight: 700;
    color: #757575;
    text-align: center;
}
.sb-mini {
    font-size: 9px;
    font-weight: 700;
    fill: #666;
    text-anchor: middle;
}
.ll { width: 26px; height: 12px; margin: 0 13px 0 12px; }
.t.b { font-weight: 700; }
.t.sb { font-weight: 600; margin-left: -1px; }
.t.oth { margin-left: 3px; }
.sw {
    width: 40px;
    height: 32px;
    border: 3px solid #000;
    margin-right: 12px;
    flex: none;
}
.sw-w { background: #f6f8f7; }
.sw-d { background: #4d4d4d; }
.sw-g { background: #e0e0e0; }

/* document */
.doc {
    width: 2488px;
    height: 1497px;
    margin-left: 13px;
    flex: none;
    display: flex;
    flex-direction: column;
    border-left: 3px solid #d6d6da;
    border-right: 3px solid #d6d6da;
    border-bottom: 3px solid #d6d6da;
    background: #f6f8f7;
}
.doc-tabs {
    height: 48px;
    background: #ebebeb;
    border-bottom: 4px solid #0078c8;
    display: flex;
    align-items: center;
    flex: none;
    position: relative;
    font-size: 23px;
    color: #333;
    margin-right: -3px;
}
.dtab {
    display: flex;
    align-items: center;
    gap: 10px;
    white-space: nowrap;
    position: absolute;
    top: 8px;
}
.ic30 { width: 30px; height: 32px; }
.t1 { left: 10px; }
.t2 { left: 217px; }
.t3 { left: 1286px; }
.dt-chev { position: absolute; left: 2459px; top: 15px; width: 15px; height: 10px; }
.ruler-row {
    height: 41px;
    padding-top: 3px;
    display: flex;
    flex: none;
}
.corner { width: 40px; }
.hruler { width: 2407px; height: 38px; }
.rl text {
    font-size: 20px;
    fill: #666;
}
.view-row {
    height: 1324px;
    display: flex;
    flex: none;
}
.vruler { width: 40px; height: 1324px; }
.canvas {
    width: 2407px;
    height: 1324px;
    overflow: hidden;
}
.canvas svg { width: 100%; height: 100%; }
.grid-l path {
    fill: none;
    stroke: #9a9a9a;
    stroke-width: 1.200;
}
.grid-t text {
    font-family: "Liberation Sans", sans-serif;
    font-size: 10.500px;
    fill: #222;
}
.gl {
    fill: none;
    stroke: #eeeeee;
    stroke-width: 2;
}
.ax text {
    font-family: "Noto Sans", sans-serif;
    font-size: 12.500px;
    fill: #555;
    text-anchor: end;
}
.cat text {
    font-family: "Noto Sans", sans-serif;
    font-size: 12.500px;
    fill: #555;
    text-anchor: end;
}
.mun path {
    fill: none;
    stroke: #8400a8;
    vector-effect: non-scaling-stroke;
    stroke-linejoin: round;
}
.mun .thick { stroke-width: 5; }
.mun .thin { stroke-width: 3; }
.mlabel text {
    font-family: "Noto Sans", sans-serif;
    font-size: 14px;
    fill: #a838c8;
}
.mlabel .c text { text-anchor: middle; }
.ley {
    font-family: "Noto Sans", sans-serif;
    font-size: 30px;
    font-weight: 700;
    fill: #222;
}
.leg-t text {
    font-family: "Liberation Sans", sans-serif;
    font-size: 12.500px;
    fill: #333;
}
.cn {
    font-family: "Noto Sans", sans-serif;
    font-size: 13px;
    fill: #222;
    stroke: #fff;
    stroke-width: 2px;
    paint-order: stroke;
    text-anchor: middle;
}
.cn.zi { fill: #555; }
.spatial {
    font-family: "Liberation Sans", sans-serif;
    font-size: 15.500px;
    fill: #1c1c1c;
}
.vscroll {
    width: 35px;
    background: #ebebeb;
    position: relative;
    flex: none;
    display: flex;
    flex-direction: column;
    align-items: center;
}
.vscroll .arr { width: 15px; height: 9px; margin-top: 15px; }
.vthumb {
    width: 18px;
    height: 390px;
    margin-top: 404px;
    border-radius: 9px;
    background: #b3b3b3;
}
.vscroll .arr:last-child { margin-top: auto; margin-bottom: 13px; }
.hscroll-row {
    height: 33px;
    display: flex;
    flex: none;
}
.hs-corner { width: 40px; }
.hscroll {
    width: 2407px;
    background: #ebebeb;
    display: flex;
    align-items: center;
    position: relative;
}
.hs-l { width: 8px; height: 16px; margin-left: 12px; }
.hthumb {
    width: 874px;
    height: 18px;
    margin-left: 1084px;
    border-radius: 9px;
    background: #b3b3b3;
}
.hs-r { width: 8px; height: 16px; margin-left: auto; margin-right: 14px; }
.status {
    height: 48px;
    display: flex;
    align-items: center;
    padding-left: 49px;
    font-size: 22px;
    color: #2b2b2b;
    position: relative;
}
.scale-box {
    width: 199px;
    height: 42px;
    background: #fff;
    border: 3px solid #a8a8a8;
    display: flex;
    align-items: center;
    padding-left: 10px;
    position: relative;
}
.zoom-box {
    width: 100px;
    height: 44px;
    background: #fff;
    margin-left: 19px;
    display: flex;
    align-items: center;
    padding-left: 11px;
    position: relative;
}
.drop {
    position: absolute;
    right: 8px;
    top: 15px;
    width: 0;
    height: 0;
    border-left: 5px solid transparent;
    border-right: 5px solid transparent;
    border-top: 8px solid #555;
}
.sep {
    width: 2px;
    height: 38px;
    background: #bdbdbd;
}
.s1 { margin-left: 9px; }
.s2 { margin-left: 10px; }
.snap-btn {
    width: 39px;
    height: 42px;
    margin-left: 8px;
    background: #a6d0ee;
    border: 2px solid #0072c6;
}
.snap-btn svg { width: 35px; height: 38px; }
.st-chev { width: 13px; height: 9px; margin-left: 12px; }
.s3 { margin-left: 20px; }
.coords {
    width: 1850px;
    padding-right: 18px;
    text-align: center;
    color: #444;
    white-space: nowrap;
}
.s4 { margin-left: 3px; }
.pause {
    display: flex;
    gap: 7px;
    margin-left: 14px;
}
.pause i {
    width: 9px;
    height: 28px;
    background: #666;
}
.s5 { margin-left: 18px; }
.refresh-ic { width: 32px; height: 32px; margin-left: 11px; }

/* dock */
.dock {
    flex: none;
    width: 61px;
    display: flex;
    flex-direction: column;
    gap: 25px;
    font-size: 22.500px;
    color: #555;
}
.dock-tab {
    writing-mode: vertical-rl;
    border-right: 12px solid #c9c9c9;
    width: 61px;
    padding-right: 5px;
    text-align: center;
    white-space: nowrap;
}
.d1 { height: 81px; }
.d2 { height: 114px; }
.d3 { height: 157px; }
.d4 { height: 169px; }
.d5 { height: 118px; }

/* map frame dropdown */
.mf-pop {
    position: absolute;
    left: 874px;
    top: 263px;
    width: 911px;
    height: 1346px;
    background: #fff;
    border: 3px solid #d8dade;
    border-radius: 5px;
    display: flex;
    flex-direction: column;
    z-index: 5;
}
.pop-head {
    height: 56px;
    flex: none;
    border-bottom: 3px solid #d8dade;
    display: flex;
    align-items: center;
    justify-content: flex-end;
    padding: 6px 54px 0 0;
    font-size: 22px;
    color: #333;
}
.pop-head svg { width: 11px; height: 8px; margin-left: 6px; }
.pop-main {
    height: 1259px;
    flex: none;
    display: flex;
    overflow: hidden;
}
.pop-list {
    width: 871px;
    flex: none;
}
.pop-sec {
    padding-left: 25px;
    border-bottom: 3px solid #dcdcdc;
}
.s-a { height: 366px; }
.s-b { height: 397px; }
.s-c { height: 395px; }
.s-d { border-bottom: none; }
.pop-sec h4 {
    margin: 0;
    height: 50px;
    line-height: 60px;
    padding-left: 5px;
    font-size: 22.500px;
    font-weight: 700;
    color: #222;
}
.s-a .items { margin-top: 5px; }
.s-b .items { margin-top: 3px; }
.items { display: flex; }
.item {
    width: 263px;
    color: #4b4b4b;
    font-size: 22.500px;
    padding-top: 30px;
}
.item.it2 {
    width: 288px;
    height: 330px;
    padding: 24px 0 0 24px;
}
.item p {
    margin: 0;
    line-height: 32px;
    white-space: nowrap;
}
.item p.sc { margin-top: 4px; }
.picked { background: #c1e4f8; }
.thumb-d {
    width: 157px;
    height: 158px;
    margin: 0 0 20px 7px;
    background: #fff;
    border: 3px solid #666;
    padding: 5px;
    box-shadow: 5px 6px 6px rgba(0, 0, 0, .4);
}
.thumb-d svg { width: 100%; height: 100%; }
.thumb-w {
    width: 174px;
    height: 172px;
    margin-bottom: 12px;
    background: #fff;
    display: flex;
    align-items: center;
    justify-content: center;
    box-shadow: 5px 6px 6px rgba(0, 0, 0, .4);
}
.m-county { width: 126px; height: 122px; }
.m-col { width: 110px; height: 153px; }
.m-cun { width: 141px; height: 158px; }
.pop-scroll {
    width: 34px;
    background: #ebebeb;
    display: flex;
    flex-direction: column;
    align-items: center;
}
.pop-scroll .arr { width: 14px; height: 8px; margin-top: 13px; }
.pop-thumb {
    width: 18px;
    height: 658px;
    margin-top: 17px;
    border-radius: 9px;
    background: #b3b3b3;
}
.pop-scroll .arr:last-child { margin-top: auto; margin-bottom: 13px; }
.pop-foot {
    flex: 1;
    display: flex;
    justify-content: flex-end;
    padding: 4px 6px 0 0;
}
.pop-foot svg { width: 14px; height: 14px; }
```
